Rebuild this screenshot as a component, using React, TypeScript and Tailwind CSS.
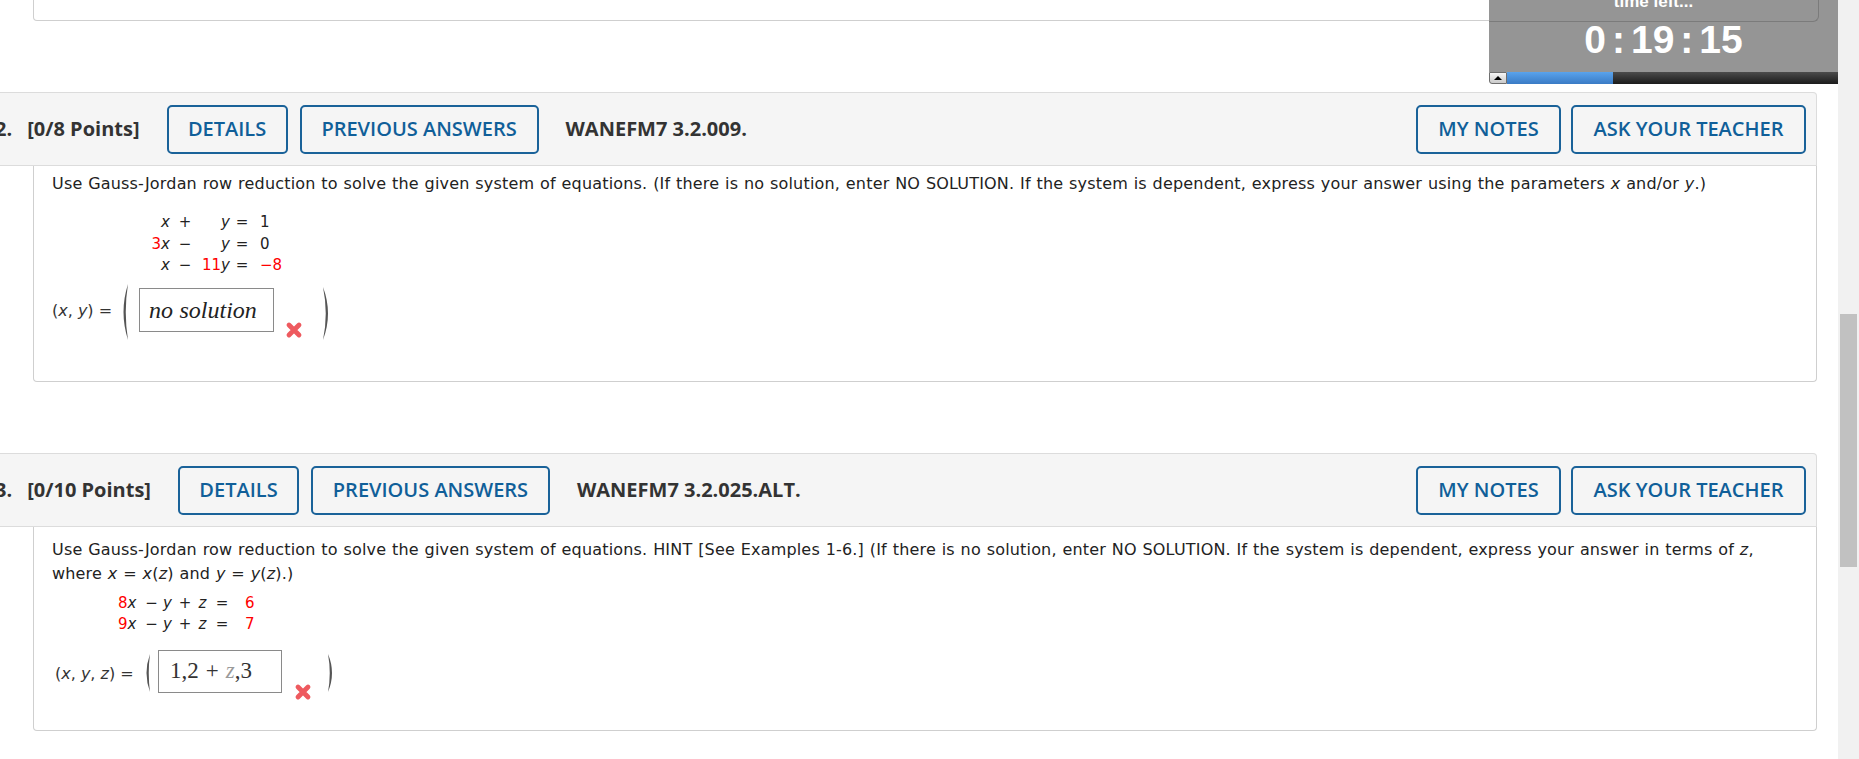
import React from "react";

const body = "font-['DejaVu_Sans',Verdana,sans-serif] text-[16px] [word-spacing:0.5px] tracking-[0.18px] text-[#222]";

function XMark() {
  return (
    <svg width="18" height="18" viewBox="0 0 18 18">
      <path d="M4 4L14 14M14 4L4 14" stroke="#ee5a5f" strokeWidth="4.8" strokeLinecap="round" />
    </svg>
  );
}

function Paren({ w, h, right }: { w: number; h: number; right?: boolean }) {
  const d = right
    ? `M1 0Q${w + 2} ${h / 2} 1 ${h}Q${w - 2.5} ${h / 2} 1 0Z`
    : `M${w - 1} 0Q-2 ${h / 2} ${w - 1} ${h}Q2.5 ${h / 2} ${w - 1} 0Z`;
  return (
    <svg width={w} height={h} viewBox={`0 0 ${w} ${h}`} className="shrink-0">
      <path d={d} fill="#555" />
    </svg>
  );
}

const R = ({ children }: { children: React.ReactNode }) => <span className="text-[#f00]">{children}</span>;

function Btn({ label, w }: { label: string; w: string }) {
  return (
    <div
      className={`${w} flex h-[49px] shrink-0 items-center justify-center rounded-[5px] border-2 border-[#1a6299] text-[20px] font-semibold text-[#105f99]`}
    >
      {label}
    </div>
  );
}

function Header({ num, points, code }: { num: string; points: string; code: string }) {
  return (
    <div className="-ml-[20px] mr-[21px] flex h-[74px] items-center rounded-tr-[4px] border border-l-0 border-[#dcdcdc] bg-[#f5f5f5] pl-[15px] pr-[10px] font-['Open_Sans',sans-serif]">
      <span className="text-[20px] font-bold text-[#333]">{num}</span>
      <span className="ml-[15px] text-[20px] font-bold text-[#333]">{points}</span>
      <div className="ml-[27px] flex gap-[12px]">
        <Btn label="DETAILS" w="w-[121px]" />
        <Btn label="PREVIOUS ANSWERS" w="w-[239px]" />
      </div>
      <span className="ml-[27px] text-[20px] font-bold text-[#333]">{code}</span>
      <div className="ml-auto flex gap-[10px]">
        <Btn label="MY NOTES" w="w-[145px]" />
        <Btn label="ASK YOUR TEACHER" w="w-[235px]" />
      </div>
    </div>
  );
}

function Question2() {
  return (
    <div>
      <Header num="2." points="[0/8 Points]" code="WANEFM7 3.2.009." />
      <div className={`ml-[33px] mr-[21px] h-[216px] rounded-b-[4px] border border-t-0 border-[#cfcfcf] pl-[18px] pt-[6px] ${body}`}>
        <p className="leading-[24px] whitespace-nowrap">
          Use Gauss-Jordan row reduction to solve the given system of equations. (If there is no solution, enter NO SOLUTION. If the
          system is dependent, express your answer using the parameters <i>x</i> and/or <i>y</i>.)
        </p>
        <div className="ml-[88px] mt-[16px] text-[15px] leading-[21.5px] tracking-normal">
          <div className="flex">
            <span className="w-[30px] text-right"><i>x</i></span>
            <span className="w-[30px] text-center">+</span>
            <span className="w-[30px] text-right"><i>y</i></span>
            <span className="w-[24px] text-center">=</span>
            <span className="pl-[6px]">1</span>
          </div>
          <div className="flex">
            <span className="w-[30px] text-right"><R>3</R><i>x</i></span>
            <span className="w-[30px] text-center">−</span>
            <span className="w-[30px] text-right"><i>y</i></span>
            <span className="w-[24px] text-center">=</span>
            <span className="pl-[6px]">0</span>
          </div>
          <div className="flex">
            <span className="w-[30px] text-right"><i>x</i></span>
            <span className="w-[30px] text-center">−</span>
            <span className="w-[30px] text-right"><R>11</R><i>y</i></span>
            <span className="w-[24px] text-center">=</span>
            <span className="pl-[6px]"><R>−8</R></span>
          </div>
        </div>
        <div className="mt-[7px] flex items-start">
          <span className="mt-[15px] w-[69px] shrink-0 whitespace-nowrap leading-[24px] tracking-normal text-[#333] [word-spacing:0]">(<i>x</i>, <i>y</i>) =</span>
          <Paren w={8} h={56} />
          <div className="ml-[10px] mt-[4px] flex h-[44px] w-[135px] shrink-0 items-center border border-[#8a8a8a] bg-white pl-[9px] font-['Liberation_Serif',serif] text-[24px] italic tracking-normal text-[#222]">
            no solution
          </div>
          <div className="ml-[11px] mt-[37px]"><XMark /></div>
          <div className="ml-[19px] mt-[3px]"><Paren w={9} h={53} right /></div>
        </div>
      </div>
    </div>
  );
}

function Question3() {
  return (
    <div className="mt-[71px]">
      <Header num="3." points="[0/10 Points]" code="WANEFM7 3.2.025.ALT." />
      <div className={`ml-[33px] mr-[21px] h-[204px] rounded-b-[4px] border border-t-0 border-[#cfcfcf] pl-[18px] pt-[11px] ${body}`}>
        <p className="leading-[24px] whitespace-nowrap">
          Use Gauss-Jordan row reduction to solve the given system of equations. HINT [See Examples 1-6.] (If there is no solution, enter
          NO SOLUTION. If the system is dependent, express your answer in terms of <i>z</i>,
        </p>
        <p className="leading-[24px] whitespace-nowrap">
          where <i>x</i> = <i>x</i>(<i>z</i>) and <i>y</i> = <i>y</i>(<i>z</i>).)
        </p>
        <div className="ml-[66px] mt-[7px] text-[15px] leading-[21px] tracking-normal">
          {[
            ["8", "6"],
            ["9", "7"],
          ].map(([c, r]) => (
            <div key={c} className="flex">
              <span className="w-[24px] whitespace-nowrap"><R>{c}</R><i>x</i></span>
              <span className="w-[19px] text-center">−</span>
              <span className="w-[13px] text-center"><i>y</i></span>
              <span className="w-[22px] text-center">+</span>
              <span className="w-[13px] text-center"><i>z</i></span>
              <span className="w-[26px] text-center">=</span>
              <span className="ml-[10px]"><R>{r}</R></span>
            </div>
          ))}
        </div>
        <div className="mt-[15px] flex items-start">
          <span className="ml-[3px] mt-[12px] w-[90px] shrink-0 whitespace-nowrap leading-[24px] tracking-normal text-[#333] [word-spacing:0]">(<i>x</i>, <i>y</i>, <i>z</i>) =</span>
          <div className="mt-[4px]"><Paren w={6} h={38} /></div>
          <div className="ml-[7px] flex h-[43px] w-[124px] shrink-0 items-center border border-[#8a8a8a] bg-white pl-[11px] font-['Liberation_Serif',serif] text-[23px] tracking-normal text-[#333]">
            1,2<span className="mx-[7px]">+</span><i className="text-[#9a9a9a]">z</i>,3
          </div>
          <div className="ml-[12px] mt-[33px]"><XMark /></div>
          <div className="ml-[15px] mt-[4px]"><Paren w={7} h={38} right /></div>
        </div>
      </div>
    </div>
  );
}

function Timer() {
  return (
    <div className="absolute left-[1489px] top-0 h-[84px] w-[349px] font-['Liberation_Sans',Arial,sans-serif]">
      <div className="relative h-[72px] overflow-hidden bg-[#959595]">
        <div className="absolute left-0 top-0 h-[22px] w-[330px] overflow-hidden rounded-br-[6px] border-b border-r border-[#7b7b7b]">
          <div className="-mt-[8px] text-center text-[17px] font-bold leading-[20px] text-white">time left...</div>
        </div>
        <div className="flex justify-center pt-[20px] text-[39px] font-bold leading-[39px] text-white">
          <span>0</span>
          <span className="mx-[6px]">:</span>
          <span>19</span>
          <span className="mx-[6px]">:</span>
          <span>15</span>
        </div>
      </div>
      <div className="flex h-[12px]">
        <div className="flex w-[18px] items-center justify-center rounded-bl-[3px] border border-[#6f6f6f] bg-linear-to-b from-[#f6f6f6] to-[#cacaca]">
          <div className="h-0 w-0 border-x-[4px] border-b-[4px] border-x-transparent border-b-black" />
        </div>
        <div className="w-[106px] bg-linear-to-b from-[#5aa3ec] to-[#3a7bc5]" />
        <div className="flex-1 bg-linear-to-b from-[#4c4c4c] to-[#1c1c1c]" />
      </div>
    </div>
  );
}

export default function App() {
  return (
    <div className="relative flex h-[759px] w-[1859px] overflow-hidden bg-white">
      <div className="w-[1838px] shrink-0 overflow-hidden">
        <div className="ml-[33px] mr-[21px] h-[21px] rounded-b-[4px] border border-t-0 border-[#cfcfcf]" />
        <div className="mt-[71px]">
          <Question2 />
        </div>
        <Question3 />
      </div>
      <div className="w-[21px] shrink-0 bg-[#f1f1f1]">
        <div className="mx-auto mt-[314px] h-[253px] w-[17px] bg-[#c1c1c1]" />
      </div>
      <Timer />
    </div>
  );
}
